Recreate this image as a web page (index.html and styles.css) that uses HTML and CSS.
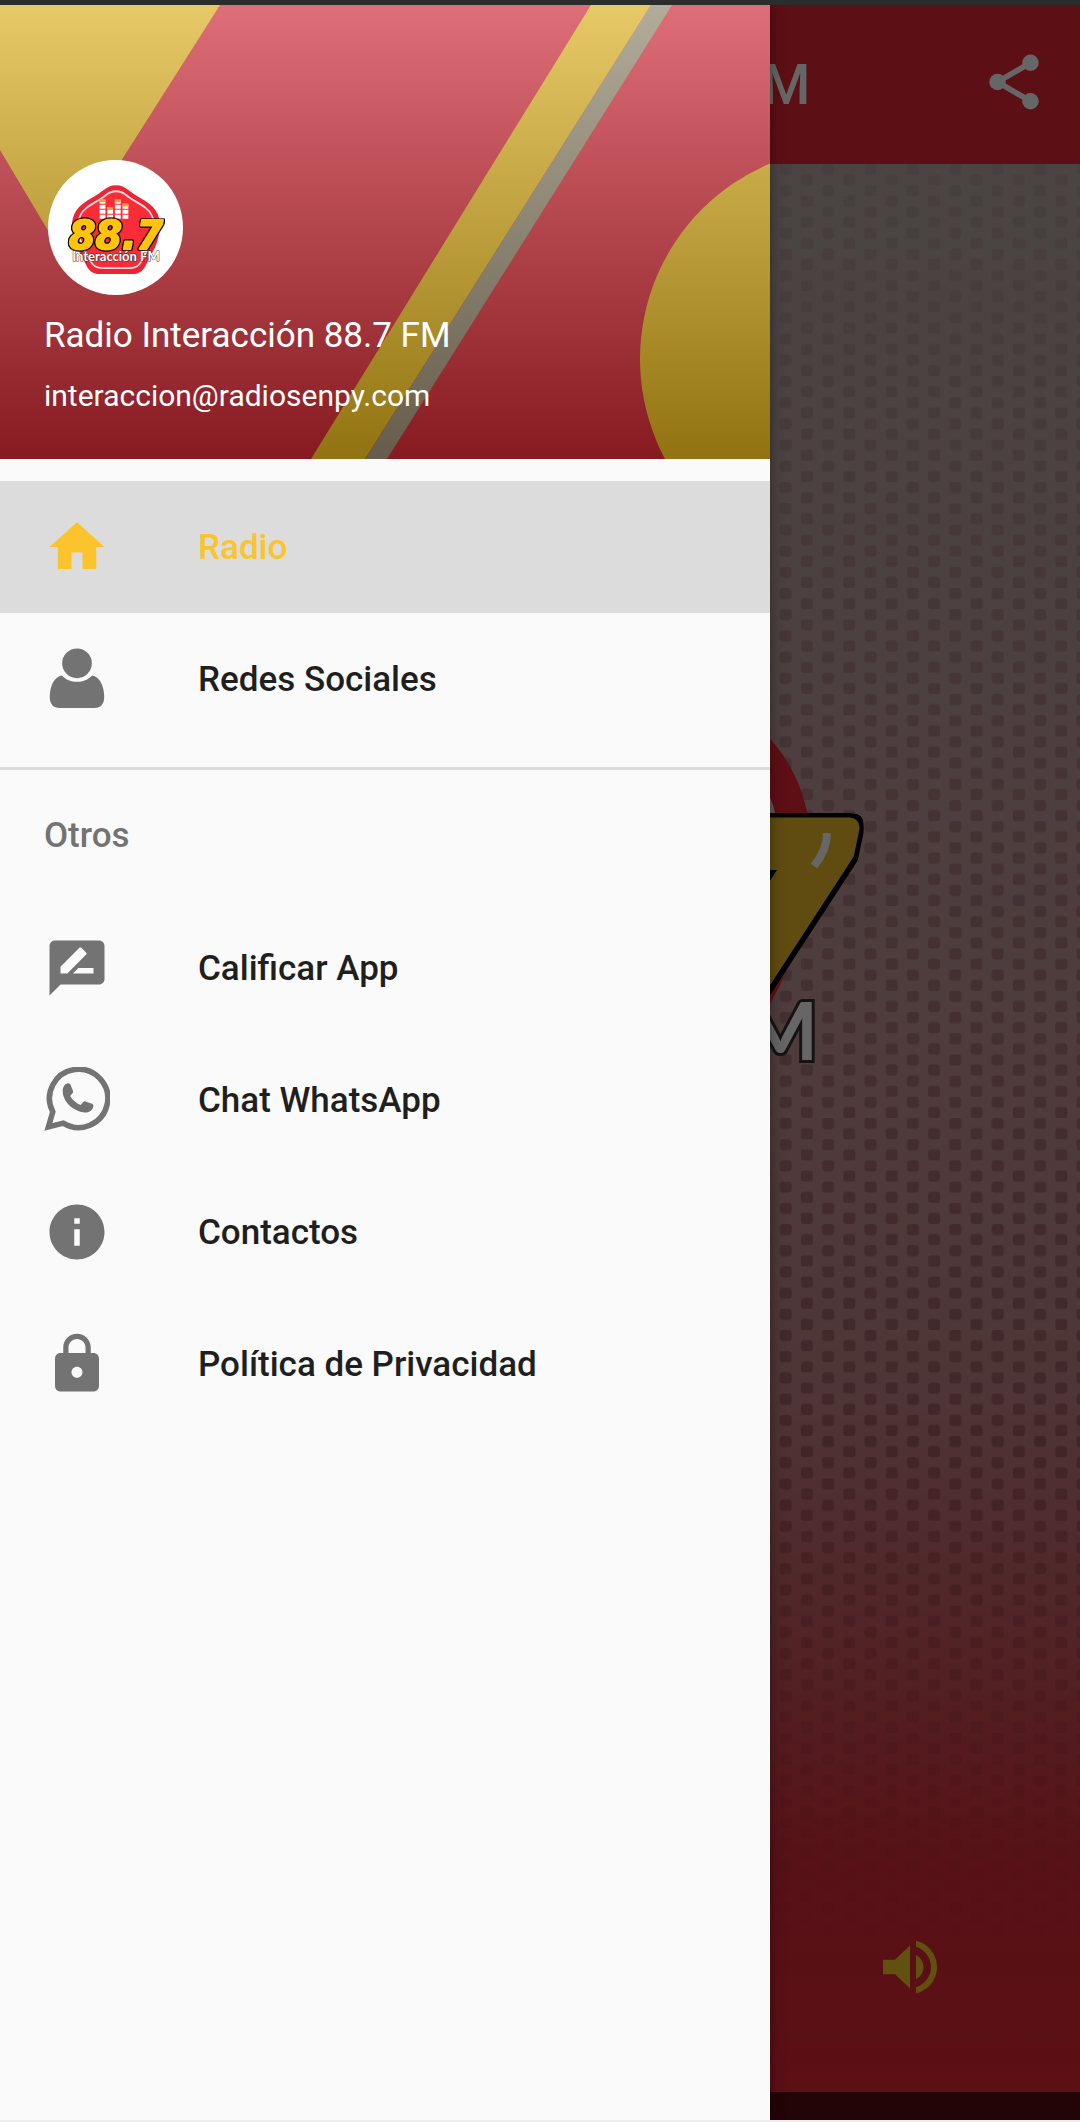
FILE: index.html
```html
<!DOCTYPE html>
<html lang="es">
<head>
  <meta charset="utf-8">
  <meta name="viewport" content="width=device-width, initial-scale=1">
  <title>Radio Interacción 88.7 FM</title>
  <link rel="stylesheet" href="styles.css">
</head>
<body>
  <!-- Badge behind the station number, shared by the player and the drawer avatar -->
  <svg class="defs" aria-hidden="true">
    <symbol id="badge" viewBox="0 0 640 600">
      <path fill="#ea2636" d="M320 12C350 12 372 22 396 42C440 78 490 98 530 130C565 158 585 195 590 240C592 300 580 350 560 395L500 510C482 545 455 558 420 558H220C185 558 158 545 140 510L80 395C60 350 48 300 50 240C55 195 75 158 110 130C150 98 200 78 244 42C268 22 290 12 320 12Z"/>
      <path fill="#f92c37" stroke="#ffd9da" stroke-width="13" transform="translate(43 39) scale(.866)" d="M320 12C350 12 372 22 396 42C440 78 490 98 530 130C565 158 585 195 590 240C592 300 580 350 560 395L500 510C482 545 455 558 420 558H220C185 558 158 545 140 510L80 395C60 350 48 300 50 240C55 195 75 158 110 130C150 98 200 78 244 42C268 22 290 12 320 12Z"/>
      <g stroke="#fff" stroke-width="36" stroke-dasharray="25 6">
        <path d="M237 219V99M284 219V146M331 219V99M378 219V125"/>
      </g>
      <path stroke="#f0a040" stroke-width="36" d="M237 117V99M284 164V146M331 117V99M378 143V125"/>
    </symbol>
  </svg>

  <div class="status-bar"></div>

  <div class="app">
    <main class="player">
      <header class="toolbar">
        <h1 class="toolbar-title">Radio Interacción 88.7 FM</h1>
        <button class="icon-button" type="button" aria-label="Compartir">
          <svg class="icon" viewBox="0 0 24 24"><path fill="none" stroke="currentColor" stroke-width="2" d="M18 5L6 12l12 7"/><circle cx="18" cy="5" r="3"/><circle cx="6" cy="12" r="3"/><circle cx="18" cy="19" r="3"/></svg>
        </button>
      </header>

      <section class="stage">
        <svg class="dots" aria-hidden="true">
          <pattern id="dot" width="42.4" height="21.2" patternUnits="userSpaceOnUse" patternTransform="translate(16 0)">
            <rect width="12" height="11" y="0" x="0.5" rx="3"/>
            <rect width="12" height="11" y="10.2" x="21.7" rx="3"/>
          </pattern>
          <rect width="100%" height="100%" fill="url(#dot)"/>
        </svg>
        <svg class="logo" viewBox="0 0 640 600">
          <use href="#badge"/>
          <text class="logo-number" x="630" y="409" text-anchor="end">88.7</text>
          <path fill="none" stroke="#fff" stroke-width="8" d="M607 243Q607 260 594 276"/>
          <text class="logo-name" x="598" y="470" text-anchor="end">Interacción FM</text>
        </svg>
        <div class="controls">
          <button class="icon-button volume" type="button" aria-label="Volumen">
            <svg class="icon icon-large" viewBox="0 0 24 24"><path d="M3 9.6v4.8h4l5 4.8V4.8L7 9.6H3zm13.5 2.4c0-1.77-1.02-3.29-2.5-4.03v8.05c1.48-.73 2.5-2.25 2.5-4.02zM14 3.23v2.06c2.89.86 5 3.54 5 6.71s-2.11 5.85-5 6.71v2.06c4.01-.91 7-4.49 7-8.77s-2.99-7.86-7-8.77z"/></svg>
          </button>
        </div>
      </section>
      <div class="bottom-bar"></div>
    </main>

    <div class="scrim"></div>

    <aside class="drawer">
      <div class="drawer-header">
        <svg class="cover" viewBox="0 0 770 454" preserveAspectRatio="none" aria-hidden="true">
          <defs>
            <linearGradient id="red" gradientUnits="userSpaceOnUse" x1="0" y1="0" x2="0" y2="454"><stop stop-color="#de6e77"/><stop offset="1" stop-color="#871a21"/></linearGradient>
            <linearGradient id="gold" gradientUnits="userSpaceOnUse" x1="0" y1="0" x2="0" y2="454"><stop stop-color="#e8c967"/><stop offset="1" stop-color="#917411"/></linearGradient>
            <linearGradient id="grey" gradientUnits="userSpaceOnUse" x1="0" y1="0" x2="0" y2="454"><stop stop-color="#b3ac9b"/><stop offset="1" stop-color="#655c4b"/></linearGradient>
          </defs>
          <rect width="770" height="454" fill="url(#red)"/>
          <path fill="url(#gold)" d="M0 0H220L62 249L0 145ZM591 0H651L365 454H311Z"/>
          <path fill="url(#grey)" d="M651 0H672L387 454H365Z"/>
          <circle cx="852" cy="354" r="212" fill="url(#gold)"/>
        </svg>
        <div class="avatar">
          <svg class="avatar-logo" viewBox="0 0 640 600">
            <use href="#badge"/>
            <text class="logo-number" x="320" y="406" text-anchor="middle">88.7</text>
            <text class="logo-name" x="320" y="476" text-anchor="middle">Interacción FM</text>
          </svg>
        </div>
        <div class="station-name">Radio Interacción 88.7 FM</div>
        <div class="station-email">interaccion@radiosenpy.com</div>
      </div>

      <nav class="menu">
        <a class="menu-item active" href="#radio">
          <svg class="icon" viewBox="0 0 24 24"><path d="M10 20v-6h4v6h5v-8h3L12 3 2 12h3v8z"/></svg>
          Radio
        </a>
        <a class="menu-item" href="#redes">
          <svg class="icon" viewBox="0 0 24 24"><circle cx="12" cy="6.3" r="5.4"/><path d="M6.500 10.700C8 12.300 9.800 13 12 13s4-.7 5.500-2.300c2.600.4 4.400 3.600 4.400 7.800 0 2.600-1.300 4-3.600 4H5.700c-2.300 0-3.600-1.400-3.600-4 0-4.200 1.800-7.400 4.400-7.800z"/></svg>
          Redes Sociales
        </a>
      </nav>

      <nav class="menu menu-others" aria-labelledby="others">
        <h2 class="menu-title" id="others">Otros</h2>
        <a class="menu-item" href="#calificar">
          <svg class="icon" viewBox="0 0 24 24"><path d="M20 2H4c-1.100 0-1.990.9-1.990 2L2 22l4-4h14c1.100 0 2-.9 2-2V4c0-1.100-.9-2-2-2zM6 14v-2.470l6.880-6.880c.2-.2.51-.2.71 0l1.770 1.770c.2.2.2.51 0 .71L8.470 14H6zm12 0h-7.500l2-2H18v2z"/></svg>
          Calificar App
        </a>
        <a class="menu-item" href="#chat">
          <svg class="icon" viewBox="0 0 24 24"><path fill="none" stroke="currentColor" stroke-width="2" d="M3.200 16.300A10.600 10.600 0 1 1 7 20.400L1.600 21.800Z"/><path d="M8.600 5.900c.5-.1.9.2 1.100.6l.8 2c.2.5 0 .9-.3 1.200l-.7.8c.9 1.500 2.200 2.600 3.800 3.300l.9-1c.3-.3.7-.4 1.100-.2l2.200.8c.4.2.6.6.4 1.100-.3 1.300-1.500 2-3 2-4.400-.4-8.100-4-8.100-7.800 0-1.400.7-2.500 1.800-2.800z"/></svg>
          Chat WhatsApp
        </a>
        <a class="menu-item" href="#contactos">
          <svg class="icon" viewBox="0 0 24 24"><path d="M12 2C6.480 2 2 6.480 2 12s4.480 10 10 10 10-4.480 10-10S17.520 2 12 2zm1 15h-2v-6h2v6zm0-8h-2V7h2v2z"/></svg>
          Contactos
        </a>
        <a class="menu-item" href="#privacidad">
          <svg class="icon" viewBox="0 0 24 24"><path d="M18 8h-1V6c0-2.760-2.240-5-5-5S7 3.240 7 6v2H6c-1.100 0-2 .9-2 2v10c0 1.100.9 2 2 2h12c1.100 0 2-.9 2-2V10c0-1.100-.9-2-2-2zm-6 9c-1.100 0-2-.9-2-2s.9-2 2-2 2 .9 2 2-.9 2-2 2zm3.100-9H8.900V6c0-1.710 1.390-3.100 3.100-3.100s3.100 1.390 3.100 3.100v2z"/></svg>
          Política de Privacidad
        </a>
      </nav>
    </aside>
  </div>
</body>
</html>
```

FILE: styles.css
```css
:root {
  --primary: #e62632;
  --accent: #fbc42c;
  --surface: #fafafa;
  --selected: #dcdcdc;
  --text: #1f1f1f;
  --text-muted: #737373;
  --gutter: 44px;
}

* {
  box-sizing: border-box;
}

body {
  display: flex;
  flex-direction: column;
  min-height: 100vh;
  margin: 0;
  font-family: Roboto, sans-serif;
  font-size: 35px;
  color: var(--text);
}

.defs {
  position: absolute;
  width: 0;
  height: 0;
}

.status-bar {
  height: 5px;
  background: #2b2c2c;
}

.app {
  position: relative;
  display: flex;
  flex: 1;
  overflow: hidden;
  border-bottom: 2px solid #eeeeee;
}

.icon {
  display: block;
  flex: none;
  width: 66px;
  height: 66px;
  fill: currentColor;
}

.icon-large {
  width: 72px;
  height: 72px;
}

.icon-button {
  padding: 0;
  border: 0;
  background: none;
  color: inherit;
  cursor: pointer;
}

/* Player screen */
.player {
  display: flex;
  flex: 1;
  flex-direction: column;
  min-width: 0;
}

.toolbar {
  display: flex;
  align-items: flex-start;
  justify-content: space-between;
  padding: 44px 33px 43px 166px;
  background: var(--primary);
  color: #fff;
}

.toolbar-title {
  margin: 0;
  font-size: 55px;
  font-weight: 500;
  line-height: 72px;
  white-space: nowrap;
}

.stage {
  position: relative;
  display: flex;
  flex: 1;
  flex-direction: column;
  align-items: center;
  justify-content: space-between;
  padding: 426px 134px 89px;
  background: linear-gradient(#b9aca8, #c1a0a0 28%, #c69496 48%, #c38689 64%, #cb5f64 75%, #d92d39 88%, #e62632);
}

.dots {
  position: absolute;
  inset: 0;
  width: 100%;
  height: 100%;
  fill: #5a1420;
  -webkit-mask-image: linear-gradient(rgba(0, 0, 0, .07), rgba(0, 0, 0, .2) 30%, rgba(0, 0, 0, .3) 66%, transparent 92%);
  mask-image: linear-gradient(rgba(0, 0, 0, .07), rgba(0, 0, 0, .2) 30%, rgba(0, 0, 0, .3) 66%, transparent 92%);
}

.logo {
  position: relative;
  width: 640px;
  height: 600px;
  overflow: visible;
}

.logo-number {
  font: italic 700 235px "DejaVu Sans", sans-serif;
  fill: #f0be28;
  stroke: #f0be28;
  stroke-width: 20px;
  stroke-linejoin: round;
  filter: drop-shadow(4px 0 #000) drop-shadow(-4px 0 #000) drop-shadow(0 4px #000) drop-shadow(0 -4px #000);
}

.logo-name {
  font: 700 80px Lato, sans-serif;
  fill: #fff;
  stroke: #333;
  stroke-width: 6px;
  paint-order: stroke;
}

.controls {
  position: relative;
  display: flex;
  align-self: stretch;
  justify-content: flex-end;
}

.volume {
  color: #f5c826;
}

.bottom-bar {
  height: 28px;
  background: #580a12;
}

.scrim {
  position: absolute;
  inset: 0;
  background: rgba(0, 0, 0, .6);
}

/* Navigation drawer */
.drawer {
  position: absolute;
  top: 0;
  bottom: 0;
  left: 0;
  width: 770px;
  max-width: 90%;
  background: var(--surface);
  box-shadow: 0 0 14px rgba(0, 0, 0, .4);
}

.drawer-header {
  position: relative;
  padding: 155px var(--gutter) 39px;
  color: #fff;
}

.cover {
  position: absolute;
  inset: 0;
  width: 100%;
  height: 100%;
}

.avatar {
  position: relative;
  display: flex;
  align-items: center;
  justify-content: center;
  width: 135px;
  height: 135px;
  margin: 0 4px 17px;
  padding-top: 8px;
  border-radius: 50%;
  background: #fff;
}

.avatar-logo {
  width: 104px;
  height: 98px;
}

.avatar-logo .logo-number {
  fill: #fcc40c;
  stroke: #fcc40c;
  stroke-width: 12px;
}

.station-name,
.station-email {
  position: relative;
  line-height: 48px;
}

.station-name {
  margin-bottom: 12px;
}

.station-email {
  font-size: 30px;
}

.menu {
  padding: 22px 0;
}

.menu-others {
  padding-top: 0;
  border-top: 3px solid var(--selected);
}

.menu-title {
  margin: 0;
  padding: 0 var(--gutter);
  font-size: 35px;
  font-weight: 500;
  line-height: 132px;
  color: var(--text-muted);
}

.menu-item {
  display: flex;
  align-items: center;
  gap: 88px;
  height: 132px;
  padding: 0 var(--gutter);
  font-weight: 500;
  color: var(--text);
  text-decoration: none;
}

.menu-item .icon {
  color: var(--text-muted);
}

.menu-item.active {
  background: var(--selected);
}

.menu-item.active,
.menu-item.active .icon {
  color: var(--accent);
}
```
